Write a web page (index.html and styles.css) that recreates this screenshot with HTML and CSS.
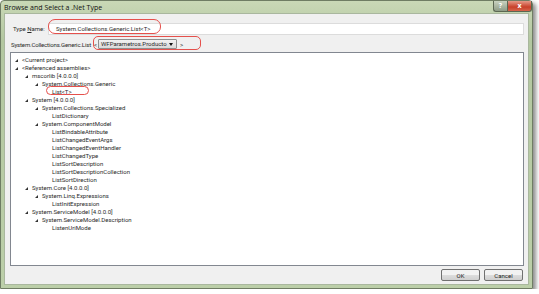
FILE: index.html
```html
<!DOCTYPE html>
<html lang="en">
<head>
    <meta charset="UTF-8">
    <title>Browse and Select a .Net Type</title>
    <link rel="stylesheet" href="styles.css">
</head>
<body>
    <div class="window">
        <div class="titlebar">
            <span class="title">Browse and Select a .Net Type</span>
            <div class="caption-buttons">
                <span class="cap help">?</span>
                <span class="cap close">x</span>
            </div>
        </div>
        <div class="client">
            <div class="row name-row">
                <label class="label">Type <u>N</u>ame:</label>
                <div class="textbox">System.Collections.Generic.List&lt;T&gt;</div>
            </div>
            <div class="row generic-row">
                <span class="label">System.Collections.Generic.List</span>
                <span class="bracket">&lt;</span>
                <div class="combo">
                    <span class="combo-text">WFParametros.Producto</span>
                    <span class="combo-arrow"></span>
                </div>
                <span class="bracket">&gt;</span>
            </div>
            <div class="tree">
                <div class="node l0"><i class="arrow"></i>&lt;Current project&gt;</div>
                <div class="node l0"><i class="arrow"></i>&lt;Referenced assemblies&gt;</div>
                <div class="node l1"><i class="arrow"></i>mscorlib [4.0.0.0]</div>
                <div class="node l2"><i class="arrow"></i>System.Collections.Generic</div>
                <div class="node l3">List&lt;T&gt;</div>
                <div class="node l1"><i class="arrow"></i>System [4.0.0.0]</div>
                <div class="node l2"><i class="arrow"></i>System.Collections.Specialized</div>
                <div class="node l3">ListDictionary</div>
                <div class="node l2"><i class="arrow"></i>System.ComponentModel</div>
                <div class="node l3">ListBindableAttribute</div>
                <div class="node l3">ListChangedEventArgs</div>
                <div class="node l3">ListChangedEventHandler</div>
                <div class="node l3">ListChangedType</div>
                <div class="node l3">ListSortDescription</div>
                <div class="node l3">ListSortDescriptionCollection</div>
                <div class="node l3">ListSortDirection</div>
                <div class="node l1"><i class="arrow"></i>System.Core [4.0.0.0]</div>
                <div class="node l2"><i class="arrow"></i>System.Linq.Expressions</div>
                <div class="node l3">ListInitExpression</div>
                <div class="node l1"><i class="arrow"></i>System.ServiceModel [4.0.0.0]</div>
                <div class="node l2"><i class="arrow"></i>System.ServiceModel.Description</div>
                <div class="node l3">ListenUriMode</div>
            </div>
            <div class="buttons">
                <button class="btn">OK</button>
                <button class="btn">Cancel</button>
            </div>
        </div>
        <!-- red annotation marks drawn over the dialog -->
        <span class="mark mark-name"></span>
        <span class="mark mark-generic"></span>
        <span class="mark mark-list"></span>
    </div>
</body>
</html>
```

FILE: styles.css
```css
body {
    margin: 0;
    background-color: #ffffff;
    font-family: Roboto, "Open Sans", sans-serif;
    font-size: 6px;
    color: #2a2a2a;
}
.window {
    position: relative;
    width: 531px;
    height: 287px;
    border: 1px solid #6f7d64;
    border-radius: 4px 4px 0 0;
    background: linear-gradient(to bottom, #c9d8b6, #b3c7a0 40px, #bccfa9);
    box-shadow: 3px 3px 4px rgba(0, 0, 0, 0.45);
    display: flex;
    flex-direction: column;
}
.titlebar {
    height: 12px;
    display: flex;
    align-items: flex-start;
    justify-content: space-between;
    padding-left: 3px;
}
.title {
    line-height: 13px;
    color: #111;
    font-family: "Open Sans", sans-serif;
    font-size: 7px;
}
.caption-buttons {
    display: flex;
}
.cap {
    height: 10px;
    line-height: 9px;
    text-align: center;
    color: #fff;
    font-family: "Open Sans", sans-serif;
    font-size: 7px;
    font-weight: bold;
    border: 1px solid #5b6752;
    border-top: none;
}
.help {
    width: 13px;
    background: linear-gradient(to bottom, #c9d3c0, #8e9c86);
    border-radius: 0 0 0 3px;
    border-right: none;
}
.close {
    width: 23px;
    background: linear-gradient(to bottom, #e59a88, #c8402a 60%, #d7654c);
    border-radius: 0 0 3px 0;
}
.client {
    flex: 1;
    margin: 0 3px 3px 3px;
    background-color: #f0f0f0;
    border: 1px solid #a9b79e;
    display: flex;
    flex-direction: column;
    padding: 0 4px 0 5px;
}
.row {
    display: flex;
    align-items: center;
    white-space: nowrap;
}
.name-row {
    margin-top: 9px;
    height: 11px;
    padding-left: 3px;
}
.name-row .label {
    width: 35px;
}
.textbox {
    flex: 1;
    height: 10px;
    line-height: 10px;
    background-color: #fff;
    border: 1px solid #dcdcdc;
    padding-left: 7px;
}
.generic-row {
    margin-top: 5px;
    height: 10px;
    padding-left: 1px;
}
.generic-row .label {
    letter-spacing: -0.15px;
}
.bracket {
    margin: 0 1px 0 3px;
}
.generic-row .bracket:last-of-type {
    margin: 0 0 0 3px;
}
.combo {
    width: 74px;
    height: 8px;
    display: flex;
    align-items: center;
    justify-content: space-between;
    background: linear-gradient(to bottom, #f2f2f2, #d9d9d9);
    border: 1px solid #8f8f8f;
    border-radius: 1px;
    padding: 0 1px 0 2px;
    line-height: 8px;
}
.combo-arrow {
    width: 0;
    height: 0;
    border-left: 2px solid transparent;
    border-right: 2px solid transparent;
    border-top: 3px solid #111;
    margin-right: 2px;
}
.tree {
    margin-top: 3px;
    height: 209px;
    background-color: #fff;
    border: 1px solid #828790;
    padding-top: 3px;
}
.node {
    height: 8px;
    line-height: 8px;
    display: flex;
    align-items: center;
    white-space: nowrap;
}
.arrow {
    width: 0;
    height: 0;
    border-left: 3px solid transparent;
    border-bottom: 3px solid #333;
    margin-right: 4px;
}
.l0 { padding-left: 4px; }
.l1 { padding-left: 14px; }
.l2 { padding-left: 24px; }
.l3 { padding-left: 41px; }
.buttons {
    display: flex;
    justify-content: flex-end;
    gap: 4px;
    margin-top: 3px;
    padding-right: 1px;
}
.btn {
    width: 39px;
    height: 12px;
    padding: 0;
    font-family: Roboto, "Open Sans", sans-serif;
    font-size: 6px;
    color: #222;
    border: 1px solid #707070;
    border-radius: 2px;
    background: linear-gradient(to bottom, #f2f2f2 50%, #dddddd 50%, #cfcfcf);
}
.mark {
    position: absolute;
    border: 1.5px solid #e5504c;
    border-radius: 7px;
    pointer-events: none;
}
.mark-name {
    left: 47px;
    top: 18px;
    width: 111px;
    height: 13px;
}
.mark-generic {
    left: 92px;
    top: 35px;
    width: 106px;
    height: 12px;
    border-radius: 5px;
}
.mark-list {
    left: 45px;
    top: 85px;
    width: 41px;
    height: 7px;
    border-radius: 5px;
}
```
